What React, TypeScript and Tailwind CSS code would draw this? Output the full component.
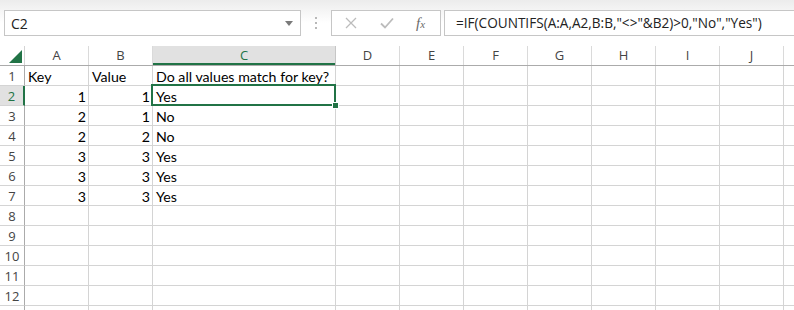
import React from 'react';

const cols = [
  { key: 'A', w: 'w-[64px]' },
  { key: 'B', w: 'w-[64px]' },
  { key: 'C', w: 'w-[183px]' },
  { key: 'D', w: 'w-[64px]' },
  { key: 'E', w: 'w-[64px]' },
  { key: 'F', w: 'w-[64px]' },
  { key: 'G', w: 'w-[64px]' },
  { key: 'H', w: 'w-[64px]' },
  { key: 'I', w: 'w-[64px]' },
  { key: 'J', w: 'w-[64px]' },
  { key: '', w: 'w-[64px]' },
];

type Cell = { v: string; right?: boolean };

const data: Record<number, Cell[]> = {
  1: [{ v: 'Key' }, { v: 'Value' }, { v: 'Do all values match for key?' }],
  2: [{ v: '1', right: true }, { v: '1', right: true }, { v: 'Yes' }],
  3: [{ v: '2', right: true }, { v: '1', right: true }, { v: 'No' }],
  4: [{ v: '2', right: true }, { v: '2', right: true }, { v: 'No' }],
  5: [{ v: '3', right: true }, { v: '3', right: true }, { v: 'Yes' }],
  6: [{ v: '3', right: true }, { v: '3', right: true }, { v: 'Yes' }],
  7: [{ v: '3', right: true }, { v: '3', right: true }, { v: 'Yes' }],
};

// row 13 is only partly on screen, so its label is left out
const rows = [1, 2, 3, 4, 5, 6, 7, 8, 9, 10, 11, 12, 13];

const uiFont = "font-['Open_Sans','Noto_Sans',sans-serif]";
const cellFont = "font-['Lato','Noto_Sans',sans-serif]";

export default function App() {
  return (
    <div className="w-[794px] h-[310px] overflow-hidden bg-white">
      {/* formula bar */}
      <div className="h-[46px] bg-gradient-to-b from-[#ececec] via-white to-white pt-[10px] flex items-start">
        <div className="ml-[4px] w-[297px] h-[26px] border border-[#c6c6c6] bg-white flex items-center">
          <span className={`${uiFont} text-[14px] text-[#222] pl-[6px] flex-1`}>C2</span>
          <svg width="8" height="5" viewBox="0 0 8 5" className="mr-[7px]">
            <path d="M0 0 L8 0 L4 5 Z" fill="#7a7a7a" />
          </svg>
        </div>
        <div className="w-[30px] h-[26px] flex flex-col items-center justify-center gap-[3px]">
          <span className="w-[2px] h-[2px] bg-[#b8b8b8]" />
          <span className="w-[2px] h-[2px] bg-[#b8b8b8]" />
          <span className="w-[2px] h-[2px] bg-[#b8b8b8]" />
        </div>
        <div className="w-[110px] h-[26px] border border-[#c6c6c6] bg-white flex items-center">
          <svg width="12" height="12" viewBox="0 0 12 12" className="ml-[13px]">
            <path d="M1 1 L11 11 M11 1 L1 11" stroke="#bcbcbc" strokeWidth="1.3" />
          </svg>
          <svg width="14" height="12" viewBox="0 0 14 12" className="ml-[23px]">
            <path d="M1 6.5 L5 10.5 L13 1.5" stroke="#bcbcbc" strokeWidth="1.8" fill="none" />
          </svg>
          <span className="ml-[22px] font-['Liberation_Serif',serif] italic text-[#6a6a6a] text-[15px] leading-none">
            f<span className="text-[11px]">x</span>
          </span>
        </div>
        <div className="ml-[3px] flex-1 h-[26px] border border-r-0 border-[#c6c6c6] bg-white flex items-center">
          <span className={`${uiFont} text-[13.6px] text-[#222] pl-[11px] whitespace-nowrap`}>
            =IF(COUNTIFS(A:A,A2,B:B,"&lt;&gt;"&amp;B2)&gt;0,"No","Yes")
          </span>
        </div>
      </div>

      {/* column headers */}
      <div className="flex h-[20px] border-b border-[#ababab]">
        <div className="w-[25px] shrink-0 border-r border-[#d4d4d4] relative">
          <svg width="13" height="13" viewBox="0 0 13 13" className="absolute left-[9px] top-[4px]">
            <path d="M13 0 L13 13 L0 13 Z" fill="#217346" />
          </svg>
        </div>
        {cols.map((c, i) => {
          const sel = c.key === 'C';
          return (
            <div
              key={i}
              className={`${c.w} shrink-0 flex items-center justify-center pt-[1px] border-r ${uiFont} text-[13px] ${
                sel
                  ? 'bg-[#e1e1e1] text-[#217346] border-[#c6c6c6] shadow-[inset_0_-2px_0_#217346]'
                  : 'text-[#444] border-[#dadada]'
              }`}
            >
              {c.key}
            </div>
          );
        })}
      </div>

      {/* grid */}
      {rows.map((r) => {
        const rowSel = r === 2;
        const cells = data[r] || [];
        return (
          <div key={r} className="flex h-[20px]">
            <div
              className={`w-[25px] shrink-0 border-b border-[#d4d4d4] flex items-center justify-center pt-[2px] ${uiFont} text-[13px] ${
                rowSel
                  ? 'bg-[#e1e1e1] text-[#217346] border-r-2 border-r-[#217346]'
                  : 'text-[#444] border-r border-r-[#ababab]'
              }`}
            >
              {r < 13 ? r : ''}
            </div>
            {cols.map((c, i) => {
              const cell = cells[i];
              const active = r === 2 && c.key === 'C';
              return (
                <div
                  key={i}
                  className={`${c.w} shrink-0 border-r border-b border-[#d4d4d4] relative flex items-center pt-[2px] ${cellFont} text-[14.2px] text-black whitespace-nowrap ${
                    cell?.right ? 'justify-end pr-[2px]' : 'pl-[3px]'
                  } ${active ? 'z-10' : ''}`}
                >
                  {cell?.v}
                  {active && (
                    <>
                      <div className="absolute left-[-2px] top-[-2px] right-[-1px] bottom-[-1px] border-2 border-[#217346] pointer-events-none" />
                      <div className="absolute right-[-4px] bottom-[-4px] w-[7px] h-[7px] bg-[#217346] border border-white pointer-events-none" />
                    </>
                  )}
                </div>
              );
            })}
          </div>
        );
      })}
    </div>
  );
}
